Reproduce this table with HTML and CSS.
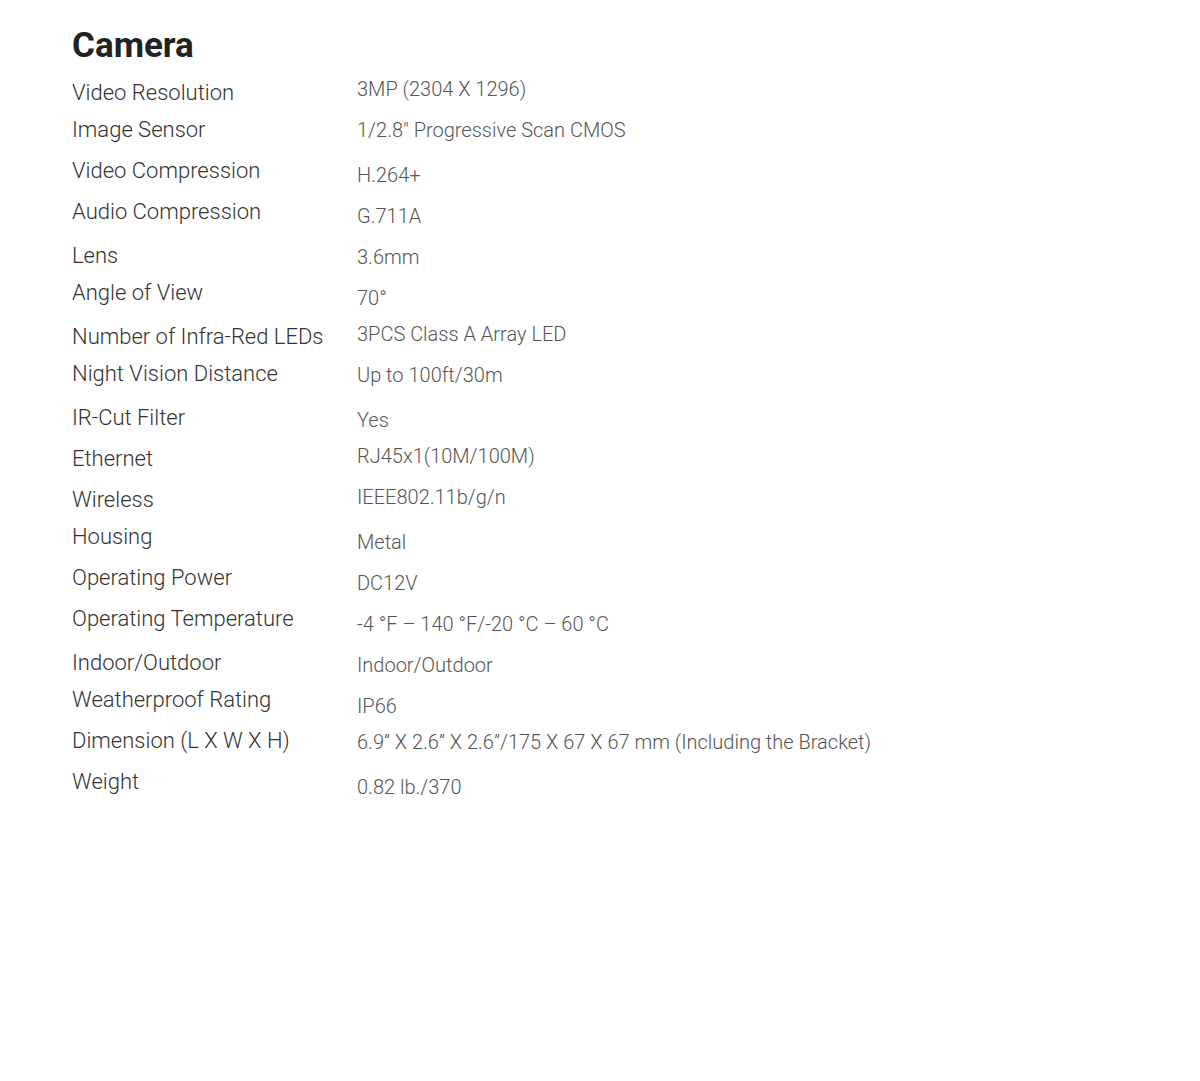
FILE: index.html
```html
<!DOCTYPE html>
<html lang="en">

<head>
	<meta charset="UTF-8">
	<title>Camera</title>
	<link rel="stylesheet" href="styles.css">
</head>

<body>
<div class="spec">
	<h2 class="title">Camera</h2>
	<div class="table">
		<ul class="names">
			<li class="tight">Video Resolution</li>
			<li>Image Sensor</li>
			<li>Video Compression</li>
			<li class="loose">Audio Compression</li>
			<li class="tight">Lens</li>
			<li class="loose">Angle of View</li>
			<li class="tight">Number of Infra-Red LEDs</li>
			<li class="loose">Night Vision Distance</li>
			<li>IR-Cut Filter</li>
			<li>Ethernet</li>
			<li class="tight">Wireless</li>
			<li>Housing</li>
			<li>Operating Power</li>
			<li class="loose">Operating Temperature</li>
			<li class="tight">Indoor/Outdoor</li>
			<li>Weatherproof Rating</li>
			<li>Dimension (L X W X H)</li>
			<li>Weight</li>
		</ul>
		<ul class="values">
			<li>3MP (2304 X 1296)</li>
			<li class="loose">1/2.8" Progressive Scan CMOS</li>
			<li>H.264+</li>
			<li>G.711A</li>
			<li>3.6mm</li>
			<li class="tight">70°</li>
			<li>3PCS Class A Array LED</li>
			<li class="loose">Up to 100ft/30m</li>
			<li class="tight">Yes</li>
			<li>RJ45x1(10M/100M)</li>
			<li class="loose">IEEE802.11b/g/n</li>
			<li>Metal</li>
			<li>DC12V</li>
			<li>-4 °F – 140 °F/-20 °C – 60 °C</li>
			<li>Indoor/Outdoor</li>
			<li class="tight">IP66</li>
			<li class="loose">6.9” X 2.6” X 2.6”/175 X 67 X 67 mm (Including the Bracket)</li>
			<li>0.82 lb./370</li>
		</ul>
	</div>
</div>
</body>

</html>
```

FILE: styles.css
```css
* {
	padding: 0;
	margin: 0;
	list-style: none;
	border: 0;
}

body {
	background: #fff;
	font-family: Roboto, "Liberation Sans", sans-serif;
}

.spec {
	padding: 26px 0 0 72px;
}

.title {
	font-size: 35px;
	line-height: 40px;
	font-weight: 700;
	color: #222;
}

.table {
	display: flex;
}

.names {
	width: 285px;
	padding-top: 14px;
	font-size: 22px;
	line-height: 26px;
	font-weight: 300;
	color: #333;
}

.values {
	padding-top: 11px;
	font-size: 20px;
	line-height: 24px;
	font-weight: 300;
	color: #555;
}

.table li {
	height: 41px;
	white-space: nowrap;
}

.table li.tight {
	height: 36.5px;
}

.table li.loose {
	height: 44.5px;
}
```
